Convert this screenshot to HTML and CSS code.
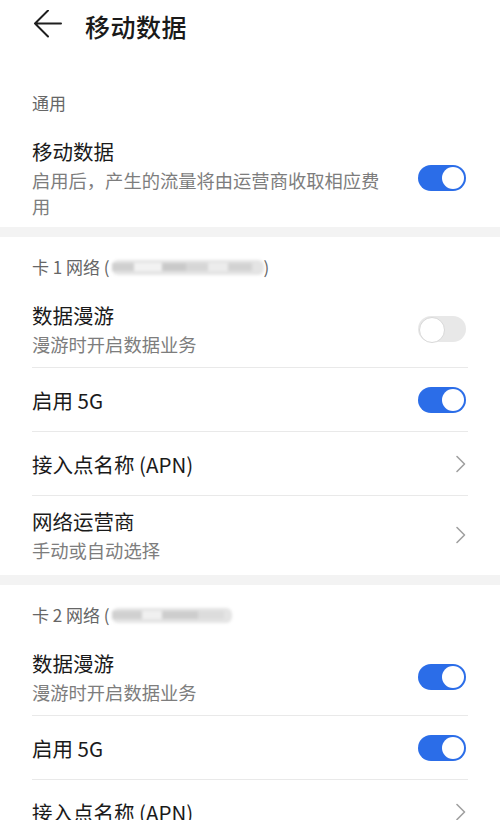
FILE: index.html
```html
<!DOCTYPE html>
<html lang="zh-CN">
<head>
<meta charset="utf-8">
<title>移动数据</title>
<link rel="stylesheet" href="styles.css">
</head>
<body>
<div class="screen">
  <header class="appbar">
    <svg class="back" width="30" height="30" viewBox="0 0 30 30">
      <path d="M2 13.5 H28 M15 0.5 L2 13.5 L15 26.5" fill="none" stroke="#1f1f1f" stroke-width="2" stroke-linecap="round" stroke-linejoin="round"/>
    </svg>
    <h1 class="title">移动数据</h1>
  </header>

  <section class="group first">
    <div class="group-head">通用</div>
    <div class="row two">
      <div class="text">
        <div class="row-title">移动数据</div>
        <div class="row-sub">启用后，产生的流量将由运营商收取相应费用</div>
      </div>
      <span class="switch on"></span>
    </div>
  </section>

  <div class="band"></div>

  <section class="group">
    <div class="group-head">卡 1 网络 (<span class="mask m1"><i class="b1"></i><i class="b2"></i><i class="b3"></i><i class="b4"></i><i class="b5"></i><i class="b6"></i></span>)</div>
    <div class="row two">
      <div class="text">
        <div class="row-title">数据漫游</div>
        <div class="row-sub">漫游时开启数据业务</div>
      </div>
      <span class="switch"></span>
    </div>
    <div class="row one">
      <div class="text"><div class="row-title">启用 5G</div></div>
      <span class="switch on"></span>
    </div>
    <div class="row one">
      <div class="text"><div class="row-title">接入点名称 (APN)</div></div>
      <svg class="chev" width="12" height="18" viewBox="0 0 12 18"><path d="M2 1.5 L9.5 9 L2 16.5" fill="none" stroke="#a0a0a0" stroke-width="1.6" stroke-linecap="round" stroke-linejoin="round"/></svg>
    </div>
    <div class="row two last">
      <div class="text">
        <div class="row-title">网络运营商</div>
        <div class="row-sub">手动或自动选择</div>
      </div>
      <svg class="chev" width="12" height="18" viewBox="0 0 12 18"><path d="M2 1.5 L9.5 9 L2 16.5" fill="none" stroke="#a0a0a0" stroke-width="1.6" stroke-linecap="round" stroke-linejoin="round"/></svg>
    </div>
  </section>

  <div class="band"></div>

  <section class="group">
    <div class="group-head">卡 2 网络 (<span class="mask m2"><i class="b1"></i><i class="b2"></i><i class="b3"></i><i class="b4"></i></span></div>
    <div class="row two">
      <div class="text">
        <div class="row-title">数据漫游</div>
        <div class="row-sub">漫游时开启数据业务</div>
      </div>
      <span class="switch on"></span>
    </div>
    <div class="row one">
      <div class="text"><div class="row-title">启用 5G</div></div>
      <span class="switch on"></span>
    </div>
    <div class="row one">
      <div class="text"><div class="row-title">接入点名称 (APN)</div></div>
      <svg class="chev" width="12" height="18" viewBox="0 0 12 18"><path d="M2 1.5 L9.5 9 L2 16.5" fill="none" stroke="#a0a0a0" stroke-width="1.6" stroke-linecap="round" stroke-linejoin="round"/></svg>
    </div>
  </section>
</div>
</body>
</html>
```
FILE: styles.css
```css
* { box-sizing: border-box; }
html, body { margin: 0; padding: 0; background: #fff; }
body {
  font-family: "Noto Sans CJK SC", "Noto Sans", sans-serif;
  color: #1a1a1a;
  width: 500px;
  height: 820px;
  overflow: hidden;
}
.screen { display: flex; flex-direction: column; }

.appbar {
  height: 52px;
  display: flex;
  align-items: center;
  padding-left: 33px;
}
.back { display: block; margin-top: -2px; }
.title {
  margin: 0 0 0 22px;
  font-size: 25px;
  font-weight: 500;
  line-height: 30px;
  color: #1a1a1a;
  letter-spacing: 0.5px;
}

.group { padding: 0 32px; display: flex; flex-direction: column; }
.group.first { margin-top: 21px; }
.group.first .row.two { padding-bottom: 8px; }
.group-head {
  padding: 20px 0 14px;
  line-height: 20px;
  font-size: 17px;
  color: #666;
  display: flex;
  align-items: center;
  white-space: nowrap;
}

.row {
  display: flex;
  align-items: center;
  gap: 24px;
  border-top: 1px solid #e9e9e9;
}
.group-head + .row { border-top: 0; }
.row.one { height: 64px; }
.row.two { padding: 10px 0; }
.row.last { padding: 11px 0 12px; }
.text { flex: 1; min-width: 0; }
.row-title {
  font-size: 20.5px;
  line-height: 28px;
  color: #1a1a1a;
}
.row-sub {
  margin-top: 2px;
  font-size: 18.3px;
  line-height: 26px;
  color: #7d7d7d;
}

.switch {
  flex: none;
  position: relative;
  width: 48px;
  height: 26px;
  border-radius: 13px;
  background: #e8e8e8;
  margin-right: 2px;
}
.switch::after {
  content: "";
  position: absolute;
  left: 1px;
  top: 1px;
  width: 24px;
  height: 24px;
  border-radius: 50%;
  background: #fff;
  border: 1.5px solid #d8d8d8;
}
.switch.on { background: #2b6de8; }
.switch.on::after { left: auto; right: 2px; top: 2px; width: 22px; height: 22px; border: 0; }

.chev { flex: none; display: block; margin-right: 1px; }

.band { height: 10px; background: #f3f3f3; }

.mask {
  display: inline-flex;
  align-items: center;
  height: 15px;
  margin-left: 2px;
  filter: blur(1.6px);
  background: #e4e4e4;
  border-radius: 6px;
}
.mask i { display: block; height: 8px; }
.m1 { width: 152px; }
.m1 .b1 { width: 22px; background: #cfcfcf; }
.m1 .b2 { width: 28px; background: #f2f2f2; }
.m1 .b3 { width: 24px; background: #c9c9c9; }
.m1 .b4 { width: 22px; background: #d6d6d6; }
.m1 .b5 { width: 20px; background: #ececec; }
.m1 .b6 { width: 24px; background: #d2d2d2; }
.m2 { width: 120px; }
.m2 .b1 { width: 30px; background: #d0d0d0; }
.m2 .b2 { width: 20px; background: #f0f0f0; }
.m2 .b3 { width: 36px; background: #cdcdcd; }
.m2 .b4 { width: 26px; background: #dcdcdc; }
```
